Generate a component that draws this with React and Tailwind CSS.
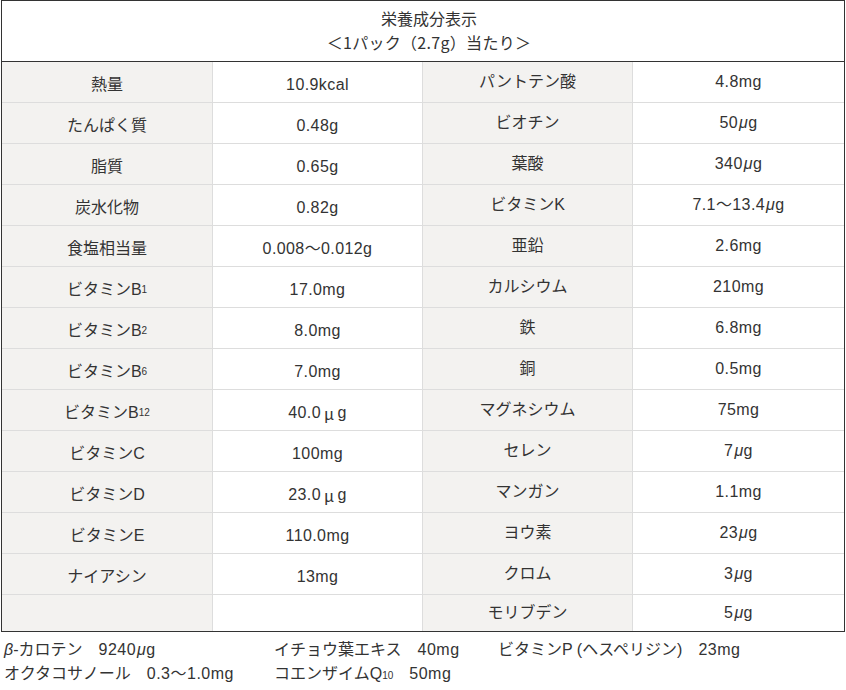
import React from 'react';

const FONT = { fontFamily: '"Liberation Sans", "Noto Sans CJK JP", sans-serif' };

// full-width μ (left column style) and narrow slanted μ (right column style)
const Mu = () => <span className="font-['Noto_Sans_CJK_JP'] mx-[3px]">μ</span>;
const MuI = () => <span className="italic ml-[1px]">μ</span>;
const Sub = ({ children }) => <span className="text-[10px]">{children}</span>;

const leftRows = [
  ['熱量', '10.9kcal'],
  ['たんぱく質', '0.48g'],
  ['脂質', '0.65g'],
  ['炭水化物', '0.82g'],
  ['食塩相当量', '0.008〜0.012g'],
  [<>ビタミンB<Sub>1</Sub></>, '17.0mg'],
  [<>ビタミンB<Sub>2</Sub></>, '8.0mg'],
  [<>ビタミンB<Sub>6</Sub></>, '7.0mg'],
  [<>ビタミンB<Sub>12</Sub></>, <>40.0<Mu />g</>],
  ['ビタミンC', '100mg'],
  ['ビタミンD', <>23.0<Mu />g</>],
  ['ビタミンE', '110.0mg'],
  ['ナイアシン', '13mg'],
  ['', ''],
];

const rightRows = [
  ['パントテン酸', '4.8mg'],
  ['ビオチン', <>50<MuI />g</>],
  ['葉酸', <>340<MuI />g</>],
  ['ビタミンK', <>7.1〜13.4<MuI />g</>],
  ['亜鉛', '2.6mg'],
  ['カルシウム', '210mg'],
  ['鉄', '6.8mg'],
  ['銅', '0.5mg'],
  ['マグネシウム', '75mg'],
  ['セレン', <>7<MuI />g</>],
  ['マンガン', '1.1mg'],
  ['ヨウ素', <>23<MuI />g</>],
  ['クロム', <>3<MuI />g</>],
  ['モリブデン', <>5<MuI />g</>],
];

export default function App() {
  return (
    <div className="w-[846px] h-[690px] bg-white text-[#333] text-[16px]" style={FONT}>
      <div className="ml-[1px] w-[844px] border border-[#333]">
        {/* 見出し */}
        <div className="h-[61px] pl-[12px] border-b border-[#333] flex flex-col items-center justify-center leading-[22px]">
          <p>栄養成分表示</p>
          <p className="font-['Noto_Sans_CJK_JP'] tracking-[0.3px]">＜1パック（2.7g）当たり＞</p>
        </div>

        <div className="h-[569px] flex flex-col">
          {rightRows.map((r, i) => {
            const l = leftRows[i];
            const last = i === rightRows.length - 1;
            return (
              <div
                key={i}
                className={`grid grid-cols-[211px_210px_210px_1fr] ${last ? 'flex-1' : 'h-[41px] border-b border-[#ddd]'}`}
              >
                <div className="bg-[#f3f2f0] border-r border-[#ddd] flex items-center justify-center pt-[5px]">{l[0]}</div>
                <div className="border-r border-[#ddd] flex items-center justify-center pt-[5px] tracking-[0.4px]">{l[1]}</div>
                <div className="bg-[#f3f2f0] border-r border-[#ddd] flex items-center justify-center">{r[0]}</div>
                <div className="flex items-center justify-center tracking-[0.4px]">{r[1]}</div>
              </div>
            );
          })}
        </div>
      </div>

      {/* その他の成分 */}
      <div className="mt-[6px] pl-[4px] grid grid-cols-[270px_224px_1fr] leading-[24px] whitespace-nowrap">
        <span><span className="italic">β</span>-カロテン　<span className="tracking-[0.5px]">9240<MuI />g</span></span>
        <span>イチョウ葉エキス　<span className="tracking-[0.5px]">40mg</span></span>
        <span>ビタミンP (ヘスペリジン)　<span className="tracking-[0.5px]">23mg</span></span>
        <span>オクタコサノール　<span className="tracking-[0.5px]">0.3〜1.0mg</span></span>
        <span>コエンザイムQ<Sub>10</Sub>　<span className="tracking-[0.5px]">50mg</span></span>
        <span></span>
      </div>
    </div>
  );
}
